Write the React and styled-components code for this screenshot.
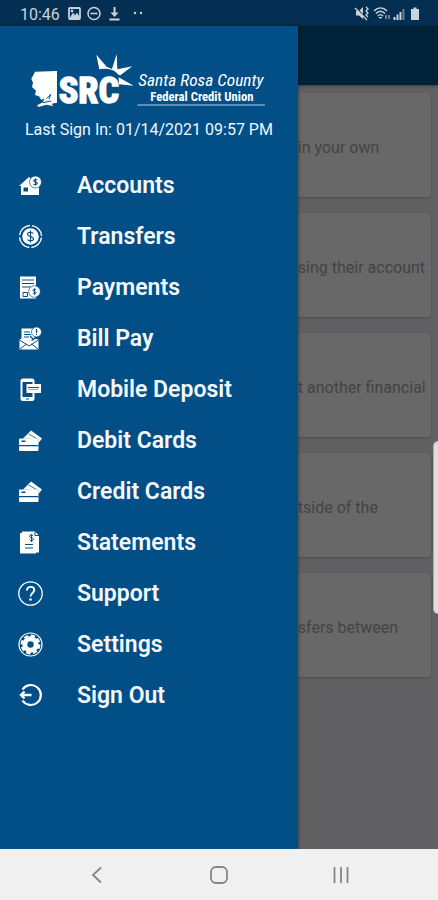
import React from "react";
import styled, { createGlobalStyle } from "styled-components";

const GlobalStyle = createGlobalStyle`
  * { box-sizing: border-box; }
  body { margin: 0; font-family: Roboto, "Liberation Sans", sans-serif; background: #616163; }
`;

const Phone = styled.div`
  position: relative;
  display: flex;
  flex-direction: column;
  min-height: 100vh;
  overflow: hidden;
`;

const StatusBar = styled.header`
  display: flex;
  justify-content: space-between;
  align-items: center;
  height: 26px;
  padding: 2px 16px 0 20px;
  background: #042f52;
  color: #c9d3dc;
  font-size: 16px;
`;

const StatusGroup = styled.div`
  display: flex;
  align-items: center;
  gap: ${(p) => p.$gap}px;
`;

const Body = styled.div`
  display: flex;
  flex: 1;
`;

const Drawer = styled.aside`
  position: relative;
  z-index: 1;
  width: 68%;
  flex: none;
  background: #024e87;
  color: #f4f8fc;
  box-shadow: 0 0 4px rgba(0, 0, 0, 0.45);
`;

const Brand = styled.div`
  display: flex;
  flex-direction: column;
  align-items: center;
  padding-top: 24px;
`;

const SignIn = styled.p`
  margin: 8px 0 0;
  font-size: 16px;
  line-height: 20px;
  white-space: nowrap;
`;

const Menu = styled.nav`
  display: flex;
  flex-direction: column;
  padding-top: 20px;
`;

const MenuLink = styled.a`
  display: flex;
  align-items: center;
  gap: 34px;
  height: 51px;
  padding-left: 18px;
  color: inherit;
  font-size: 23px;
  font-weight: 600;
  text-decoration: none;
  white-space: nowrap;
`;

const Content = styled.main`
  flex: 1;
  min-width: 0;
  margin-left: -8px;
  background: #616163;
`;

const AppBar = styled.div`
  height: 59px;
  background: #002239;
  box-shadow: 0 1px 3px rgba(0, 0, 0, 0.4);
`;

const Cards = styled.div`
  display: flex;
  flex-direction: column;
  gap: 16px;
  padding: 8px 7px 16px 0;
`;

const Card = styled.section`
  display: flex;
  align-items: center;
  height: 104px;
  padding: 4px 0 0 8px;
  border-radius: 0 4px 4px 0;
  background: #686868;
  box-shadow: 0 1px 3px rgba(0, 0, 0, 0.22);
  color: #434346;
  font-size: 16px;
  white-space: nowrap;
`;

const EdgeHandle = styled.div`
  position: absolute;
  z-index: 2;
  top: 441px;
  right: 0;
  width: 5px;
  height: 173px;
  border: 1px solid #aaa;
  border-right: 0;
  border-radius: 5px 0 0 5px;
  background: #dedede;
`;

const SystemNav = styled.nav`
  position: relative;
  z-index: 2;
  display: grid;
  grid-template-columns: repeat(3, 1fr);
  height: 51px;
  padding: 0 36px;
  background: #f0f0f0;
`;

const NavButton = styled.button`
  display: grid;
  place-items: center;
  padding: 0;
  border: 0;
  background: none;
  color: #858585;
`;

const BG = "#024e87";

const Icon = ({ children }) => (
  <svg width="25" height="25" viewBox="0 0 25 25" fill="none" stroke="none" aria-hidden="true">
    {children}
  </svg>
);

const Coin = ({ x, y, r, size }) => (
  <>
    <circle cx={x} cy={y} r={r} fill="#fff" stroke={BG} strokeWidth="0.7" />
    <path
      transform={`translate(${x} ${y}) scale(${size})`}
      d="M2-2C1-3.2-2-3-2-1.4C-2 0 2 0 2 1.5C2 3.2-1 3.2-2.2 2M0-4V4"
      stroke={BG}
      strokeWidth="1.2"
    />
  </>
);

const AccountsIcon = () => (
  <Icon>
    <path d="M1 13L11 4l10 9v9H3v-9z" fill="#fff" />
    <path d="M5.500 14.500h4.500v4H5.500z" fill={BG} />
    <Coin x={17.500} y={9} r={6} size={0.9} />
  </Icon>
);

const TransfersIcon = () => (
  <Icon>
    <circle cx="12.500" cy="12.500" r="11" stroke="#fff" strokeWidth="1.400" strokeDasharray="15.300 2" strokeDashoffset="-1" />
    <circle cx="12.500" cy="12.500" r="8.300" fill="#fff" />
    <path d="M15.500 9.500C14 7.500 9.500 7.800 9.500 10.300C9.500 13 15.500 12 15.500 14.700C15.500 17.300 11 17.500 9.300 15.500M12.500 6.500v12" stroke={BG} strokeWidth="1.100" />
  </Icon>
);

const PaymentsIcon = () => (
  <Icon>
    <path d="M2 1.500h16v22H2z" fill="#fff" />
    <path d="M4 5h12M4 8.500h12M4 12h9M5 17.500h4.500v4H5z" stroke={BG} strokeWidth="1" />
    <Coin x={16.500} y={16.500} r={5.800} size={0.8} />
  </Icon>
);

const BillPayIcon = () => (
  <Icon>
    <path d="M1.500 13.500l2-1V2.500h13v10l4 1v10h-19z" fill="#fff" />
    <path d="M1.500 14l9.500 6 9.500-6M2 23l6.500-5M20 23l-6.500-5M6 6h6M6 8.500h7M6 11h5" stroke={BG} strokeWidth="1" />
    <path d="M12 10l4 4M13.500 14.500l6-4" stroke={BG} strokeWidth="1.200" />
    <circle cx="18.500" cy="6" r="5" fill="#fff" stroke={BG} strokeWidth="0.700" />
    <path d="M18.500 3v4M18.500 8v1" stroke={BG} strokeWidth="1.300" />
  </Icon>
);

const DepositIcon = () => (
  <Icon>
    <rect x="3.500" y="2.500" width="12" height="20.500" rx="1.500" stroke="#fff" strokeWidth="2" />
    <path d="M4 4h11M4 21h11" stroke="#fff" strokeWidth="2" />
    <path d="M8 22h3" stroke={BG} strokeWidth="1" />
    <path d="M8.500 7h14.500v9H8.500z" fill="#fff" />
    <path d="M10 10.500h11" stroke={BG} strokeWidth="1" />
    <path d="M11 12.500h9" stroke={BG} strokeWidth="0.500" />
  </Icon>
);

const CardsIcon = () => (
  <Icon>
    <path d="M5 10.500L13 2.500 24 10.500 20.500 15V11z" fill="#fff" />
    <path d="M10.500 6l9 5" stroke={BG} strokeWidth="0.800" />
    <rect x="1" y="10.500" width="19.500" height="12.500" rx="1" fill="#fff" />
    <path d="M3.500 12.500h4v1.500h-4zM1 17h19.500v1.200H1z" fill={BG} />
  </Icon>
);

const StatementsIcon = () => (
  <Icon>
    <path d="M2 3h2v18.500h14v2H2z" fill="#fff" />
    <path d="M4 1.500h13l4 4V22.500H4z" fill="#fff" />
    <path d="M17 1.500v4h4M7 14.500h8M7 18h8" stroke={BG} strokeWidth="1" />
    <path d="M15 5.500c-1-1-3.500-.8-3.500.8 0 2 4 1 4 3 0 1.700-3 1.700-4 .4M13.500 4v8" stroke={BG} strokeWidth="1" />
  </Icon>
);

const SupportIcon = () => (
  <Icon>
    <circle cx="12.500" cy="12.500" r="11.700" stroke="#fff" strokeWidth="1.300" />
    <path d="M9 9.500c0-5 7.300-4.500 7.300-.5 0 3-3.800 3-3.800 6.500" stroke="#fff" strokeWidth="1.900" />
    <circle cx="12.500" cy="18.500" r="1.300" fill="#fff" />
  </Icon>
);

const SettingsIcon = () => (
  <Icon>
    <circle cx="12.500" cy="12.500" r="11.500" stroke="#fff" strokeWidth="1.200" />
    <circle cx="12.500" cy="12.500" r="5.700" stroke="#fff" strokeWidth="5" />
    <circle cx="12.500" cy="12.500" r="8.700" stroke="#fff" strokeWidth="2.500" strokeDasharray="4.200 2.633" />
  </Icon>
);

const SignOutIcon = () => (
  <Icon>
    <path d="M4.500 6.500A10 10 0 1 1 4.500 17.500" stroke="#fff" strokeWidth="2.200" />
    <path d="M4 12h9.500M6.500 8.500L3 12l3.500 3.500" stroke="#fff" strokeWidth="2.400" />
  </Icon>
);

const Logo = () => (
  <svg width="260" height="62" viewBox="0 0 780 186" role="img" aria-label="SRC Santa Rosa County Federal Credit Union">
    <g fill="#fff">
      <path d="M48 65L114 63V158L98 161 103 168 82 164 58 171 54 166 72 157 76 145 67 150 60 139 48 135 51 122 39 111 42 98 37 86 42 77z" />
      <path d="M241 58L232 14 263 50 279 57 293 12 295 58 340 49 304 76 298 74C286 56 257 54 241 58zM299 82L344 107 300 103z" />
      <text x="119" y="160" fontFamily="Roboto Condensed, Roboto, sans-serif" fontWeight="800" fontSize="108" stroke="#fff" strokeWidth="4">SRC</text>
      <text x="358" y="108" fontFamily="Roboto Condensed, Roboto, sans-serif" fontStyle="italic" fontSize="52">Santa Rosa County</text>
      <text x="394" y="152" fontFamily="Roboto Condensed, Roboto, sans-serif" fontWeight="700" fontSize="38">Federal Credit Union</text>
    </g>
    <path d="M355 165H738" stroke="#b7d1e6" strokeWidth="3" />
    <path d="M83 146L95 133 90 148M72 158L97 153" stroke={BG} strokeWidth="3" fill="none" />
  </svg>
);

const MENU = [
  ["Accounts", AccountsIcon],
  ["Transfers", TransfersIcon],
  ["Payments", PaymentsIcon],
  ["Bill Pay", BillPayIcon],
  ["Mobile Deposit", DepositIcon],
  ["Debit Cards", CardsIcon],
  ["Credit Cards", CardsIcon],
  ["Statements", StatementsIcon],
  ["Support", SupportIcon],
  ["Settings", SettingsIcon],
  ["Sign Out", SignOutIcon],
];

const CARDS = ["in your own", "sing their account", "t another financial", "tside of the", "sfers between"];

export default function App() {
  return (
    <Phone>
      <GlobalStyle />
      <StatusBar>
        <StatusGroup $gap={8}>
          <span>10:46</span>
          <svg width="78" height="16" viewBox="0 0 78 16" fill="none" stroke="#c9d3dc" aria-hidden="true">
            <rect x="1" y="2" width="11" height="11" rx="1" strokeWidth="1.800" />
            <path d="M2 12l3-5 2 2.500L9 7l3 5zM3 4h2v2H3z" fill="#c9d3dc" strokeWidth="0.500" />
            <circle cx="26" cy="7.500" r="6" strokeWidth="1.500" />
            <path d="M22.500 7.500h7" strokeWidth="1.600" />
            <path d="M46.500 1v8M41.500 13.500h10" strokeWidth="2" />
            <path d="M42.500 6.500h8L46.500 11z" fill="#c9d3dc" stroke="none" />
            <circle cx="67" cy="7" r="1.200" fill="#c9d3dc" stroke="none" />
            <circle cx="73" cy="7" r="1.200" fill="#c9d3dc" stroke="none" />
          </svg>
        </StatusGroup>
        <svg width="68" height="16" viewBox="0 0 68 16" fill="none" stroke="#c9d3dc" aria-hidden="true">
          <path d="M2 5h3l4-4v12L5 9.500H2z" fill="#c9d3dc" stroke="none" />
          <path d="M1 1l12 12" stroke="#042f52" strokeWidth="1.600" />
          <path d="M1 2l12 12M12 1l2 2-2 2 2 2-2 2 2 2" strokeWidth="1.300" />
          <path d="M20 5c4-4 9-4 13 0M22 7.500c3-3 6-3 9 0M24 10c2-2 3-2 5 0" strokeWidth="1.600" />
          <path d="M26.500 13l-2-2h4z" fill="#c9d3dc" stroke="none" />
          <path d="M32 9v4M35 9v4" strokeWidth="1" />
          <path d="M40.500 11v3M43.500 8.500V14M46.500 6v8" strokeWidth="2" />
          <path d="M49.500 3v11" strokeWidth="2" opacity=".5" />
          <path d="M57 3H59.500V1.500h3V3h2.500v11h-8z" fill="#c9d3dc" stroke="none" />
        </svg>
      </StatusBar>
      <Body>
        <Drawer>
          <Brand>
            <Logo />
            <SignIn>Last Sign In: 01/14/2021 09:57 PM</SignIn>
          </Brand>
          <Menu aria-label="Main">
            {MENU.map(([label, Glyph]) => (
              <MenuLink key={label} href="#">
                <Glyph />
                {label}
              </MenuLink>
            ))}
          </Menu>
        </Drawer>
        <Content>
          <AppBar />
          <Cards>
            {CARDS.map((text) => (
              <Card key={text}>{text}</Card>
            ))}
          </Cards>
        </Content>
      </Body>
      <EdgeHandle />
      <SystemNav aria-label="System">
        <NavButton aria-label="Back">
          <svg width="20" height="20" viewBox="0 0 20 20" fill="none" stroke="currentColor" strokeWidth="1.800">
            <path d="M14 2.500L6 10l8 7.500" />
          </svg>
        </NavButton>
        <NavButton aria-label="Home">
          <svg width="20" height="20" viewBox="0 0 20 20" fill="none" stroke="currentColor" strokeWidth="1.800">
            <rect x="2" y="2" width="16" height="16" rx="5" />
          </svg>
        </NavButton>
        <NavButton aria-label="Recent apps">
          <svg width="20" height="20" viewBox="0 0 20 20" fill="none" stroke="currentColor" strokeWidth="1.800">
            <path d="M3.500 2v16M10 2v16M16.500 2v16" />
          </svg>
        </NavButton>
      </SystemNav>
    </Phone>
  );
}
